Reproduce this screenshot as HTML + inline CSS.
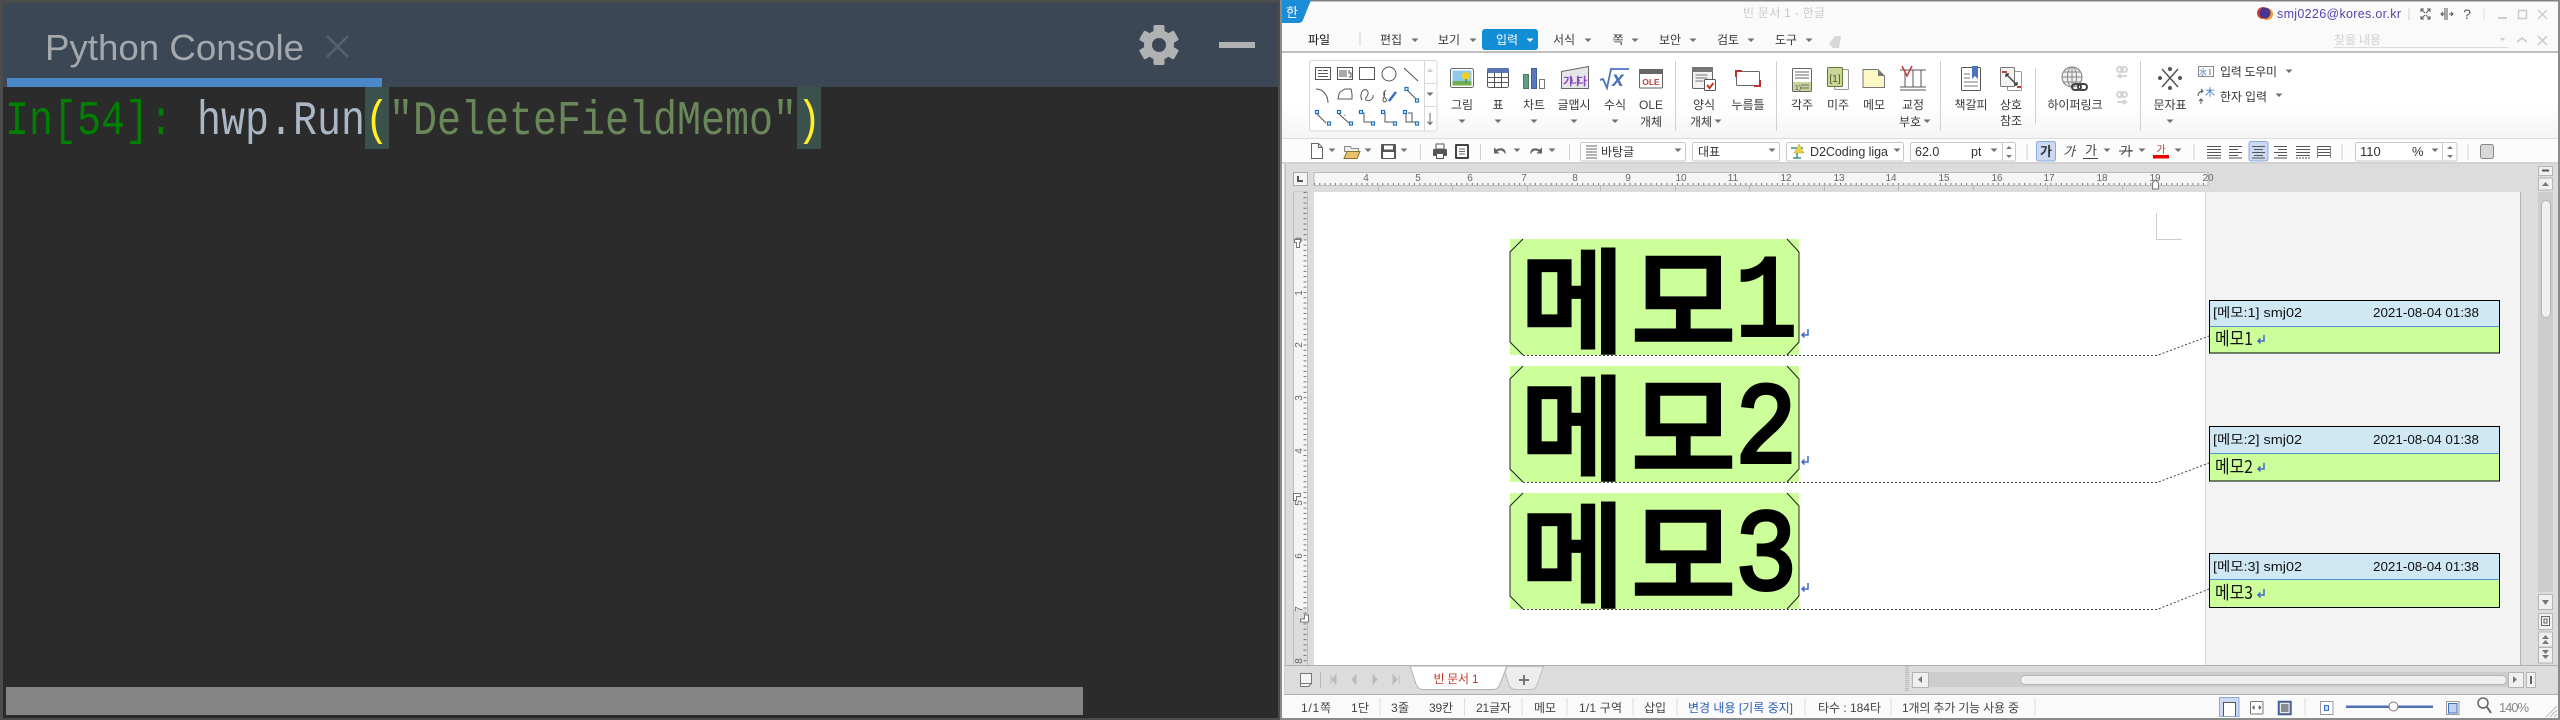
<!DOCTYPE html>
<html><head><meta charset="utf-8"><title>Python Console / 한글</title>
<style>
html,body{margin:0;padding:0;background:#fff;width:2560px;height:720px;overflow:hidden}
svg{display:block}
text{font-family:"Liberation Sans","Noto Sans CJK KR",sans-serif;white-space:pre}
.k{font-size:12px;fill:#3a3a3a;text-anchor:middle}
.s{font-size:12px;fill:#555;text-anchor:middle}
.r{font-size:10px;fill:#666;text-anchor:middle}
.m{font-family:"Liberation Mono",monospace;font-size:48px}
.big{font-family:"Noto Sans CJK KR",sans-serif;font-weight:400;font-size:112px;fill:#000;stroke:#000;stroke-width:5.5px;stroke-linejoin:miter}
.num{font-family:"Liberation Mono",monospace;font-weight:400;font-size:116px;fill:#000;stroke:#000;stroke-width:4px}
.t{font-size:13px;fill:#111}
.b{font-family:"Noto Sans CJK KR",sans-serif;font-size:18px;fill:#111}
.ln{fill:none;stroke:#555;stroke-width:1}
.bl{fill:#fff;stroke:#1f6fb8;stroke-width:1.2}
.dot{fill:none;stroke:#444;stroke-width:1;stroke-dasharray:2 2}
.sep{stroke:#d0d0d0;stroke-width:1}
.cb{fill:#fff;stroke:#c8c8c8;stroke-width:1}
.btn{fill:#f0f0f0;stroke:#b5b5b5;stroke-width:1}
</style></head><body>
<svg xmlns="http://www.w3.org/2000/svg" width="2560" height="720" viewBox="0 0 2560 720">
<defs>
<path id="c" d="M-3.5-1.5h7l-3.500 3.500z" fill="#707070"/>
<path id="ret" d="M7 0v6H1M3.500 3.500L1 6l2.500 2.500" fill="none" stroke="#3f66cc" stroke-width="1.500"/>
<path id="bs" d="M-5 0H5M-5 3H5" stroke="#555"/>
</defs>

<!-- LEFT: Python Console -->
<rect x="0" y="0" width="1280" height="720" fill="#4b4d4d"/>
<rect x="3" y="3" width="1275" height="84" fill="#3c4756"/>
<rect x="3" y="87" width="1275" height="631" fill="#2b2b2b"/>
<rect x="7" y="78" width="375" height="9" fill="#4a88c7"/>
<text x="45" y="60" font-size="36" fill="#a4a8ac" textLength="259" lengthAdjust="spacingAndGlyphs">Python Console</text>
<path d="M327 36L348 57M348 36L327 57" stroke="#56616b" stroke-width="2.500"/>
<g transform="translate(1159 45)" fill="#afb1b3">
<circle r="11" fill="none" stroke="#afb1b3" stroke-width="8"/>
<rect x="-5.500" y="-20" width="11" height="10" rx="1.500"/>
<rect x="-5.500" y="-20" width="11" height="10" rx="1.500" transform="rotate(60)"/>
<rect x="-5.500" y="-20" width="11" height="10" rx="1.500" transform="rotate(120)"/>
<rect x="-5.500" y="-20" width="11" height="10" rx="1.500" transform="rotate(180)"/>
<rect x="-5.500" y="-20" width="11" height="10" rx="1.500" transform="rotate(240)"/>
<rect x="-5.500" y="-20" width="11" height="10" rx="1.500" transform="rotate(300)"/>
</g>
<rect x="1219" y="42" width="36" height="6" fill="#afb1b3"/>
<rect x="365" y="87" width="24" height="62" fill="#3b514d"/>
<rect x="797" y="87" width="24" height="62" fill="#3b514d"/>
<text class="m" x="5" y="134" fill="#008000" textLength="168" lengthAdjust="spacingAndGlyphs">In[54]:</text>
<text class="m" x="197" y="134" fill="#a9b7c6" textLength="168" lengthAdjust="spacingAndGlyphs">hwp.Run</text>
<text class="m" x="365" y="134" fill="#ffef28" textLength="24" lengthAdjust="spacingAndGlyphs">(</text>
<text class="m" x="389" y="134" fill="#6a8759" textLength="408" lengthAdjust="spacingAndGlyphs">"DeleteFieldMemo"</text>
<text class="m" x="797" y="134" fill="#ffef28" textLength="24" lengthAdjust="spacingAndGlyphs">)</text>
<rect x="6" y="687" width="1077" height="28" fill="#858585"/>

<!-- RIGHT: window frame -->
<rect x="1280" y="0" width="1280" height="720" fill="#fafafa"/>
<rect x="1280" y="0" width="1280" height="1.500" fill="#808080"/>
<path d="M1280 0H1311L1303 20Q1302 23 1298 23H1280Z" fill="#1a8dd6"/>
<text x="1292" y="17" font-size="13" fill="#fff" text-anchor="middle">한</text>
<text x="1784" y="17" font-size="12" fill="#c9c9c9" text-anchor="middle" textLength="82">빈 문서 1 - 한글</text>

<circle cx="2263" cy="13" r="6" fill="#d93a2b"/><circle cx="2267" cy="14" r="6" fill="#f29a2e"/><circle cx="2265" cy="13" r="5.500" fill="#46368f"/>
<text x="2277" y="18" font-size="12.500" fill="#5245ad" textLength="124">smj0226@kores.or.kr</text>
<path d="M2409 8V20" class="sep"/>
<path d="M2421 9l4 4M2430 9l-4 4M2421 19l4-4M2430 19l-4-4M2421 12V9h3M2430 12V9h-3M2421 16v3h3M2430 16v3h-3" fill="none" stroke="#555"/>
<path d="M2447 8V20M2441 14h4M2449 14h4M2443 12l-2 2 2 2M2451 12l2 2-2 2M2445 8v12" fill="none" stroke="#555"/>
<text x="2467" y="19" font-size="14" fill="#555" text-anchor="middle">?</text>
<path d="M2484 8V20" stroke="#e0e0e0"/>
<rect x="2498" y="17" width="9" height="2" fill="#ccc"/>
<rect x="2518.500" y="10.500" width="8" height="8" fill="none" stroke="#ccc" stroke-width="1.500"/>
<path d="M2538 10l9 9M2547 10l-9 9" stroke="#ccc" stroke-width="1.500"/>

<!-- Menu row -->
<text class="k" x="1319" y="44" style="fill:#111">파일</text>
<path d="M1360 33V46" class="sep"/>
<rect x="1482" y="29" width="56" height="21" rx="3" fill="#128ed6"/>
<g class="men">
<text class="k" x="1391" y="44">편집</text><use href="#c" x="1415" y="40"/>
<text class="k" x="1449" y="44">보기</text><use href="#c" x="1473" y="40"/>
<text class="k" x="1507" y="44" style="fill:#fff">입력</text><path d="M1526.500 38.500h7l-3.500 3.500z" fill="#fff"/>
<text class="k" x="1564" y="44">서식</text><use href="#c" x="1588" y="40"/>
<text class="k" x="1618" y="44">쪽</text><use href="#c" x="1635" y="40"/>
<text class="k" x="1670" y="44">보안</text><use href="#c" x="1693" y="40"/>
<text class="k" x="1728" y="44">검토</text><use href="#c" x="1751" y="40"/>
<text class="k" x="1786" y="44">도구</text><use href="#c" x="1809" y="40"/>
</g>
<path d="M1829 44l6-8 6 0-2 12-6 0z" fill="#d8d8d8"/>
<text x="2334" y="44" font-size="12" fill="#d0d0d0" textLength="47">찾을 내용</text>
<path d="M2334 47.500H2508" stroke="#dcdcdc"/>
<path d="M2499.500 38h6l-3 3z" fill="#d0d0d0"/>
<path d="M2517 42l5-4 5 4" fill="none" stroke="#c8c8c8" stroke-width="1.500"/>
<path d="M2538 36l9 9M2547 36l-9 9" stroke="#c8c8c8" stroke-width="1.500"/>
<rect x="1280" y="51" width="1280" height="2" fill="#c0c0c0"/>

<!-- Ribbon -->
<defs><linearGradient id="rg" x1="0" y1="0" x2="0" y2="1"><stop offset="0.6" stop-color="#fff"/><stop offset="1" stop-color="#f5f5f5"/></linearGradient></defs>
<rect x="1281" y="53" width="1279" height="85" fill="url(#rg)"/>
<path d="M1280 138.500H2560" stroke="#dcdcdc"/>
<rect x="1309.500" y="60.500" width="127.500" height="70.500" rx="2" fill="#fff" stroke="#d8d8d8"/>
<path d="M1424.500 61V131M1424.500 83.500H1437M1424.500 106.500H1437" stroke="#d8d8d8"/>
<path d="M1427 72h6l-3-4z" fill="#d0d0d0"/><use href="#c" x="1430" y="94"/>
<path d="M1430 113v11M1427.500 121.500l2.500 3 2.500-3" fill="none" stroke="#666"/>
<!-- gallery -->
<g class="ln">
<rect x="1315.500" y="67.500" width="15" height="12"/><path d="M1318 70.500h4M1318 73.500h10M1318 76.500h10M1323 70.500h5" />
<rect x="1337.500" y="67.500" width="15" height="12"/><path d="M1340 70v7M1342 70v7M1344 70v7M1346 70v7M1349 70v3h2v4h-2"/>
<rect x="1359.500" y="67.500" width="15" height="12"/>
<circle cx="1389" cy="74" r="7"/>
<path d="M1404 68L1418 81"/>
<path d="M1316 89C1323 89 1328 95 1328 103"/>
<path d="M1340 92l5-3h6l1 5v5h-14l1-5z"/>
<path d="M1362 100C1358 92 1366 86 1368 92C1369 97 1364 97 1366 100C1369 102 1374 99 1373 95"/>
<path d="M1386 90c-3 2-3 6 0 9 2 3-3 4-3 1 0-3 3-4 1-9"/>
<path d="M1389 101l7-9" stroke="#3c6fc3" stroke-width="2.500"/>
<path d="M1407 90L1416 99M1317 114L1326 123M1339 114L1349 123M1345 116v-1M1361 113h3v9h8M1382 113h3v9h9M1403 113h3v9h10M1408 113h4v9"/>
</g>
<g class="bl">
<rect x="1405" y="87.500" width="3" height="3"/><rect x="1415.500" y="99" width="3" height="3"/>
<rect x="1315.500" y="110.500" width="3" height="3"/><rect x="1327.500" y="122" width="3" height="3"/>
<rect x="1337.500" y="110.500" width="3" height="3"/><rect x="1349.500" y="122" width="3" height="3"/>
<rect x="1359.500" y="110.500" width="3" height="3"/><rect x="1371.500" y="122" width="3" height="3"/>
<rect x="1381.500" y="110.500" width="3" height="3"/><rect x="1393.500" y="122" width="3" height="3"/>
<rect x="1403.500" y="110.500" width="3" height="3"/><rect x="1415.500" y="122" width="3" height="3"/>
</g>
<!-- 그림 -->
<rect x="1450.500" y="68.500" width="23" height="19" rx="2" fill="#fff" stroke="#666"/>
<rect x="1452.500" y="70.500" width="19" height="15" fill="#8fc9ee"/><rect x="1452.500" y="81" width="19" height="4.500" fill="#6fae52"/>
<circle cx="1466" cy="76" r="4" fill="#f6cf25"/><rect x="1465" y="79" width="2" height="4" fill="#5b9a40"/>
<text class="k" x="1462" y="109">그림</text><use href="#c" x="1462" y="121"/>
<!-- 표 -->
<rect x="1487.500" y="68.500" width="21" height="19" rx="2" fill="#fff" stroke="#555"/>
<rect x="1487" y="68" width="22" height="5" rx="1" fill="#5a74b4"/>
<path d="M1494.500 73V87M1501.500 73V87M1488 77.500H1508M1488 82.500H1508" stroke="#555"/>
<text class="k" x="1498" y="109">표</text><use href="#c" x="1498" y="121"/>
<!-- 차트 -->
<rect x="1523.500" y="74.500" width="5" height="14" fill="#5fa082" stroke="#4d7b63"/>
<rect x="1531.500" y="68.500" width="5" height="20" fill="#5a78bd" stroke="#3f5c9c"/>
<rect x="1539.500" y="79.500" width="5" height="9" fill="#fff" stroke="#777"/>
<text class="k" x="1534" y="109">차트</text><use href="#c" x="1534" y="121"/>
<!-- 글맵시 -->
<path d="M1561.500 71.500L1588.500 66.500V88.500H1561.500Z" fill="#e6e6e6" stroke="#666"/>
<text x="1575" y="85" font-size="11" font-weight="700" fill="#8a4bbf" text-anchor="middle" textLength="24">가나다</text>
<text class="k" x="1574" y="109">글맵시</text><use href="#c" x="1574" y="121"/>
<!-- 수식 -->
<path d="M1600 80l3-1 4 9 4-19h18" fill="none" stroke="#4b72bd" stroke-width="1.800"/>
<text x="1618" y="86" font-family="Liberation Serif" font-style="italic" font-weight="700" font-size="21" fill="#4b72bd" text-anchor="middle">x</text>
<text class="k" x="1615" y="109">수식</text><use href="#c" x="1615" y="121"/>
<!-- OLE -->
<rect x="1639.500" y="69.500" width="23" height="18.500" rx="1" fill="#fff" stroke="#666"/>
<rect x="1639" y="69" width="24" height="5" fill="#666"/>
<text x="1651" y="85" font-size="8.500" font-weight="700" fill="#c23b3b" text-anchor="middle">OLE</text>
<text class="k" x="1651" y="109">OLE</text><text class="k" x="1651" y="126">개체</text>
<path d="M1675.500 61V131" class="sep"/>
<!-- 양식 -->
<rect x="1692.500" y="67.500" width="20" height="21" rx="1" fill="#f2f2f2" stroke="#666"/><rect x="1692" y="67" width="21" height="5" fill="#777"/>
<path d="M1695.500 75h12M1695.500 78h12M1695.500 81h8" stroke="#777"/>
<rect x="1704.500" y="79.500" width="11" height="11" rx="1" fill="#fff" stroke="#555"/>
<path d="M1707 85l2.500 3 4-5" fill="none" stroke="#c0392b" stroke-width="2"/>
<text class="k" x="1704" y="109">양식</text><text class="k" x="1701" y="126">개체</text><use href="#c" x="1718" y="121"/>
<!-- 누름틀 -->
<rect x="1736.500" y="71.500" width="23" height="14" rx="1" fill="#fff" stroke="#666"/>
<path d="M1736 77v-6h6M1760 80v6h-6" fill="none" stroke="#b83232" stroke-width="2"/>
<text class="k" x="1748" y="109">누름틀</text>
<path d="M1776.500 61V131" class="sep"/>
<!-- 각주 -->
<rect x="1792.500" y="68.500" width="19" height="23" rx="1" fill="#fff" stroke="#666"/>
<rect x="1793" y="82" width="18" height="9" fill="#c8d69a"/>
<path d="M1795 72h14M1795 75h14M1795 78h14M1801 85h8M1801 88h8" stroke="#666"/>
<text x="1798" y="90" font-size="7" fill="#555" text-anchor="middle">1)</text>
<text class="k" x="1802" y="109">각주</text>
<!-- 미주 -->
<rect x="1834.500" y="69.500" width="14" height="20" rx="1" fill="#fafafa" stroke="#999"/>
<rect x="1827.500" y="67.500" width="15" height="19" rx="1" fill="#c8d69a" stroke="#667a3a"/>
<text x="1835" y="82" font-family="Liberation Mono" font-size="10" fill="#445522" text-anchor="middle">[1]</text>
<text class="k" x="1838" y="109">미주</text>
<!-- 메모 -->
<path d="M1863 69.500H1878L1884.500 76V87.500H1863Z" fill="#fdf6c5" stroke="#777"/>
<path d="M1878 70L1884 76H1878Z" fill="#777"/>
<text class="k" x="1874" y="109">메모</text>
<!-- 교정 -->
<path d="M1900 70H1926M1900 87H1926M1900 90H1926M1905 70V87M1913 70V87M1921 70V87" stroke="#555" fill="none"/>
<path d="M1902 66l5 10 5-10" fill="none" stroke="#c23b3b" stroke-width="1.500"/>
<text class="k" x="1913" y="109">교정</text><text class="k" x="1910" y="126">부호</text><use href="#c" x="1927" y="121"/>
<path d="M1940.500 61V131" class="sep"/>
<!-- 책갈피 -->
<rect x="1961.500" y="67.500" width="19" height="23" rx="1" fill="#fff" stroke="#555"/>
<path d="M1972 66h6v13l-3-3-3 3z" fill="#4f74bc"/>
<path d="M1964 74h6M1964 78h6M1964 82h14M1964 86h14" stroke="#777"/>
<text class="k" x="1971" y="109">책갈피</text>
<!-- 상호 참조 -->
<rect x="2007.500" y="71.500" width="14" height="19" rx="1" fill="#fff" stroke="#999"/>
<rect x="2000.500" y="67.500" width="14" height="19" rx="1" fill="#f4f4f4" stroke="#777"/>
<path d="M2002 72h5M2017 87h4" stroke="#c23b3b" stroke-width="2"/>
<path d="M2006 74L2017 85M2006 74v3M2006 74h3M2017 85v-3M2017 85h-3" stroke="#444" stroke-width="1.500" fill="none"/>
<text class="k" x="2011" y="109">상호</text><text class="k" x="2011" y="125">참조</text>
<path d="M2035.500 68V124" class="sep"/>
<!-- 하이퍼링크 -->
<circle cx="2072" cy="77" r="10" fill="#eee" stroke="#777"/>
<path d="M2072 67V87M2062 77H2082M2063.500 72H2080.500M2063.500 82H2080.500" stroke="#888"/><ellipse cx="2072" cy="77" rx="4.500" ry="10" fill="none" stroke="#888"/>
<rect x="2072" y="84" width="9" height="6" rx="3" fill="none" stroke="#444" stroke-width="2"/><rect x="2078" y="84" width="9" height="6" rx="3" fill="none" stroke="#444" stroke-width="2"/>
<text class="k" x="2075" y="109">하이퍼링크</text>
<g fill="none" stroke="#d4d4d4" stroke-width="2">
<rect x="2117" y="67" width="6" height="5" rx="2.500"/><rect x="2121" y="67" width="6" height="5" rx="2.500"/>
<path d="M2127 76h-9M2121 74l-3 2 3 2"/>
<rect x="2117" y="92" width="6" height="5" rx="2.500"/><rect x="2121" y="92" width="6" height="5" rx="2.500"/>
<path d="M2117 102h9M2123 100l3 2-3 2"/>
</g>
<path d="M2140.500 61V131" class="sep"/>
<!-- 문자표 -->
<path d="M2162 69L2178 87M2178 69L2162 87" stroke="#555" stroke-width="1.500"/>
<circle cx="2170" cy="69" r="2" fill="#555"/><circle cx="2170" cy="88" r="2" fill="#555"/><circle cx="2160" cy="78" r="2" fill="#555"/><circle cx="2180" cy="78" r="2" fill="#555"/>
<text class="k" x="2170" y="109">문자표</text><use href="#c" x="2170" y="121"/>
<rect x="2198.500" y="66.500" width="15" height="10" fill="#fff" stroke="#888"/>
<text x="2203" y="75" font-size="8" fill="#3c78c4" text-anchor="middle">水</text><text x="2210" y="75" font-size="8" fill="#444" text-anchor="middle">I</text>
<text x="2220" y="76" font-size="12" fill="#333" textLength="57">입력 도우미</text><use href="#c" x="2289" y="71"/>
<path d="M2198 96c0-3 2-5 5-5M2201 89l2 2-2 2M2201 104v-5M2199 101l2-2 2 2" fill="none" stroke="#555"/>
<text x="2210" y="96" font-size="10" fill="#3c78c4" text-anchor="middle">木</text>
<text x="2220" y="101" font-size="12" fill="#333" textLength="47">한자 입력</text><use href="#c" x="2279" y="95"/>

<!-- Toolbar -->
<rect x="1280" y="139" width="1280" height="24" fill="#fcfcfc"/>
<path d="M1311.500 143.500h7l4 4v11h-11z M1318.500 143.500v4h4" fill="#fff" stroke="#666"/><use href="#c" x="1332" y="150"/>
<path d="M1344.500 146.500h6l1 2h7v3h-14z" fill="#efefef" stroke="#888"/><path d="M1347 151.500h13l-3 7h-13z" fill="#e9c26e" stroke="#8a7434"/><use href="#c" x="1368" y="150"/>
<rect x="1381" y="144" width="15" height="15" rx="1" fill="#555"/><rect x="1384" y="145.500" width="9" height="4" fill="#fff"/><rect x="1383" y="152" width="11" height="6" fill="#fff"/><use href="#c" x="1404" y="150"/>
<path d="M1420.500 144V160" class="sep"/>
<rect x="1433" y="149" width="14" height="7" rx="1" fill="#555"/><rect x="1436" y="144" width="8" height="5" fill="#fff" stroke="#555"/><rect x="1436.500" y="153.500" width="7" height="5" fill="#fff" stroke="#555"/>
<rect x="1455" y="144" width="14" height="15" rx="1" fill="#444"/><rect x="1457" y="146" width="10" height="11" fill="#fff"/><path d="M1459 149h6M1459 151.500h6M1459 154h6" stroke="#666"/>
<path d="M1480.500 144V160" class="sep"/>
<path d="M1494 147.500v6h5.500l-2-2c3-2 6-1 8 3 1-5-3-8-9-5z" fill="#666"/><use href="#c" x="1517" y="150"/>
<path d="M1542 147.500v6h-5.500l2-2c-3-2-6-1-8 3-1-5 3-8 9-5z" fill="#666"/><use href="#c" x="1552" y="150"/>
<path d="M1569.500 144V160" class="sep"/>
<rect class="cb" x="1580.500" y="142.500" width="105" height="18.500" rx="2"/><path d="M1586 146h11M1586 149h11M1586 152h11M1586 155h11M1586 158h11" stroke="#666"/>
<text x="1601" y="156" font-size="12" fill="#333">바탕글</text><use href="#c" x="1678" y="150"/>
<rect class="cb" x="1692.500" y="142.500" width="87" height="18.500" rx="2"/><text x="1698" y="156" font-size="12" fill="#333">대표</text><use href="#c" x="1772" y="150"/>
<rect class="cb" x="1786.500" y="142.500" width="117" height="18.500" rx="2"/>
<path d="M1791 148h12M1797 148v10M1793 158h8" stroke="#3e8e8a" stroke-width="1.500" fill="none"/><path d="M1799 144l5 9h-10z" fill="#f0cf4a" stroke="#b39b2c" stroke-width=".5"/>
<text x="1810" y="156" font-size="12.500" fill="#333" textLength="78">D2Coding liga</text><use href="#c" x="1897" y="150"/>
<rect class="cb" x="1910.500" y="142.500" width="105" height="18.500" rx="2"/><text x="1915" y="156" font-size="12.500" fill="#333">62.0</text><text x="1971" y="156" font-size="12.500" fill="#333">pt</text><use href="#c" x="1994" y="150"/>
<path d="M2002.500 143V161" stroke="#c8c8c8"/><path d="M2006 149h6l-3-3zM2006 155h6l-3 3z" fill="#777"/>
<path d="M2027 144V160" class="sep"/>
<rect x="2036.500" y="141.500" width="19" height="19.500" rx="2" fill="#cbdaf2" stroke="#8eaadb"/>
<text x="2046" y="156" font-size="13" font-weight="700" fill="#333" text-anchor="middle">가</text>
<text x="2069" y="156" font-size="13" font-style="italic" fill="#444" text-anchor="middle">가</text>
<text x="2091" y="155" font-size="13" fill="#444" text-anchor="middle">가</text><path d="M2083 158.500H2098" stroke="#444"/><use href="#c" x="2107" y="150"/>
<text x="2126" y="156" font-size="13" fill="#444" text-anchor="middle">가</text><path d="M2119 151H2133" stroke="#444"/><use href="#c" x="2142" y="150"/>
<text x="2161" y="153" font-size="10" fill="#b53a3a" text-anchor="middle">가</text><rect x="2153" y="155" width="16" height="3.500" fill="#ee0000"/><use href="#c" x="2178" y="150"/>
<path d="M2194 144V160" class="sep"/>
<rect x="2249" y="141.500" width="19" height="19.500" rx="2" fill="#cbdaf2" stroke="#8eaadb"/>
<g stroke="#555">
<path d="M2207 146.500h14M2207 149.500h14M2207 152.500h14M2207 155.500h14M2207 158h14"/>
<path d="M2229 146.500h13M2229 149.500h9M2229 152.500h13M2229 155.500h9M2229 158h13"/>
<path d="M2252 146.500h13M2254 149.500h9M2252 152.500h13M2254 155.500h9M2252 158h13"/>
<path d="M2274 146.500h13M2278 149.500h9M2274 152.500h13M2278 155.500h9M2274 158h13"/>
<path d="M2296 146.500h14M2296 149.500h14M2296 152.500h14M2296 155.500h14" /><path d="M2296 158h14" stroke-dasharray="2 1"/>
<path d="M2317 146.500h14M2317 149.500h14M2317 152.500h14M2317 155.500h14"/><path d="M2317.500 146V158M2330.500 146V158" stroke="#888"/>
</g>
<path d="M2342 144V160" class="sep"/>
<rect class="cb" x="2355.500" y="142.500" width="101.500" height="18.500" rx="2"/><text x="2360" y="156" font-size="13" fill="#333">110</text><text x="2412" y="156" font-size="13" fill="#333">%</text><use href="#c" x="2435" y="150"/>
<path d="M2442.500 143V161" stroke="#c8c8c8"/><path d="M2447 149h6l-3-3zM2447 155h6l-3 3z" fill="#777"/>
<path d="M2468 144V160" class="sep"/>
<rect x="2480.500" y="144.500" width="13" height="14" rx="2" fill="#d8d8d8" stroke="#888"/>
<path d="M1280 163H2560" stroke="#c4c4c4" stroke-width="1.500"/>

<!-- Doc area -->
<rect x="1282" y="164" width="1276" height="502" fill="#dcdcdc"/>
<rect x="1282" y="164" width="3" height="530" fill="#fafafa"/><path d="M1285 164V695" stroke="#a8a8a8"/>
<!-- top ruler -->
<rect x="1314" y="172.500" width="894" height="13" fill="#f5f5f5" stroke="#bdbdbd"/>
<rect x="1293.500" y="172.500" width="14" height="13" fill="#f4f4f4" stroke="#aaa"/><path d="M1298 176v5h5" fill="none" stroke="#555" stroke-width="2"/>
<path d="M1314 184H2208" stroke="#777" stroke-width="2" stroke-dasharray="1 4.260"/>
<path d="M1378.500 186v5M1452.500 186v5M1527.500 186v5M1600.500 186v5M1675.500 186v5M1749.500 186v5M1824.500 186v5M1898.500 186v5M1973.500 186v5M2047.500 186v5M2122.500 186v5" stroke="#bbb"/>
<text class="r" y="181" x="1366">4</text><text class="r" y="181" x="1418">5</text><text class="r" y="181" x="1470">6</text><text class="r" y="181" x="1524">7</text><text class="r" y="181" x="1575">8</text><text class="r" y="181" x="1628">9</text><text class="r" y="181" x="1681">10</text><text class="r" y="181" x="1733">11</text><text class="r" y="181" x="1786">12</text><text class="r" y="181" x="1839">13</text><text class="r" y="181" x="1891">14</text><text class="r" y="181" x="1944">15</text><text class="r" y="181" x="1997">16</text><text class="r" y="181" x="2049">17</text><text class="r" y="181" x="2102">18</text><text class="r" y="181" x="2155">19</text><text class="r" y="181" x="2208">20</text>
<path d="M2152.500 186v-3l3-3 3 3v6h-6z" fill="#fff" stroke="#777"/>
<!-- left ruler -->
<rect x="1293.500" y="192" width="14" height="473" fill="#f5f5f5" stroke="#bdbdbd"/>
<rect x="1294" y="192" width="13" height="47" fill="#dcdcdc"/>
<rect x="1294" y="609" width="13" height="56" fill="#dcdcdc"/>
<path d="M1305 192V665" stroke="#777" stroke-width="3" stroke-dasharray="1 4.260"/>
<g>
<text class="r" transform="translate(1302 240) rotate(-90)">0</text><text class="r" transform="translate(1302 293) rotate(-90)">1</text><text class="r" transform="translate(1302 345) rotate(-90)">2</text><text class="r" transform="translate(1302 398) rotate(-90)">3</text><text class="r" transform="translate(1302 451) rotate(-90)">4</text><text class="r" transform="translate(1302 503) rotate(-90)">5</text><text class="r" transform="translate(1302 556) rotate(-90)">6</text><text class="r" transform="translate(1302 609) rotate(-90)">7</text><text class="r" transform="translate(1302 661) rotate(-90)">8</text>
</g>
<path d="M1294.500 239.500h6v3h-1v5h-3v-5h-2z" fill="#fff" stroke="#777"/>
<path d="M1293.500 493.500h7v3h-4v4h-3z" fill="#fff" stroke="#777"/>
<path d="M1308.500 615v7h-8v-3h4v-4z" fill="#fff" stroke="#777"/>

<!-- paper -->
<rect x="1314" y="192" width="891" height="473" fill="#fff"/>
<rect x="2205" y="192" width="315" height="473" fill="#f3f3f3"/>
<path d="M2205.500 192V665" stroke="#dcdcdc"/>
<path d="M2520.500 192V665" stroke="#b4b4b4"/>
<path d="M2156.500 213V239.500H2182" fill="none" stroke="#ccc"/>

<!-- Green field boxes -->
<g>
<rect x="1510" y="239" width="289" height="116" fill="#ccff99"/>
<rect x="1510" y="366" width="289" height="116" fill="#ccff99"/>
<rect x="1510" y="493" width="289" height="116" fill="#ccff99"/>
</g>
<g fill="none" stroke="#222" stroke-width="1">
<path d="M1523 239l-13 13V342l13 13M1787 239l12 13V342l-12 13"/>
<path d="M1523 366l-13 13V469l13 13M1787 366l12 13V469l-12 13"/>
<path d="M1523 493l-13 13V596l13 13M1787 493l12 13V596l-12 13"/>
</g>
<text class="big" x="1521" y="343">메</text><text class="big" x="1632" y="343">모</text><text class="num" x="1735" y="335" textLength="62" lengthAdjust="spacingAndGlyphs">1</text>
<text class="big" x="1521" y="470">메</text><text class="big" x="1632" y="470">모</text><text class="num" x="1735" y="462" textLength="62" lengthAdjust="spacingAndGlyphs">2</text>
<text class="big" x="1521" y="597">메</text><text class="big" x="1632" y="597">모</text><text class="num" x="1735" y="589" textLength="62" lengthAdjust="spacingAndGlyphs">3</text>
<use href="#ret" x="1801" y="329"/><use href="#ret" x="1801" y="456"/><use href="#ret" x="1801" y="583"/>

<!-- dotted leaders -->
<path class="dot" d="M1523 355.500H2157L2209 336"/>
<path class="dot" d="M1523 482.500H2157L2209 463"/>
<path class="dot" d="M1523 609.500H2157L2209 589"/>

<!-- memo boxes -->
<g>
<rect x="2209.500" y="300.500" width="290" height="52.500" fill="#ccff99" stroke="#000"/>
<rect x="2210" y="301" width="289" height="25" fill="#d0e8f4"/><path d="M2210 326.500H2499" stroke="#4f95cf"/>
<text class="t" x="2213" y="317" textLength="89" lengthAdjust="spacingAndGlyphs">[메모:1] smj02</text><text class="t" x="2373" y="317" textLength="106" lengthAdjust="spacingAndGlyphs">2021-08-04 01:38</text>
<text class="b" x="2215" y="345" textLength="38" lengthAdjust="spacingAndGlyphs">메모1</text><use href="#ret" x="2257" y="335"/>

<rect x="2209.500" y="426.500" width="290" height="54.500" fill="#ccff99" stroke="#000"/>
<rect x="2210" y="427" width="289" height="26" fill="#d0e8f4"/><path d="M2210 453.500H2499" stroke="#4f95cf"/>
<text class="t" x="2213" y="444" textLength="89" lengthAdjust="spacingAndGlyphs">[메모:2] smj02</text><text class="t" x="2373" y="444" textLength="106" lengthAdjust="spacingAndGlyphs">2021-08-04 01:38</text>
<text class="b" x="2215" y="473" textLength="38" lengthAdjust="spacingAndGlyphs">메모2</text><use href="#ret" x="2257" y="463"/>

<rect x="2209.500" y="553.500" width="290" height="54" fill="#ccff99" stroke="#000"/>
<rect x="2210" y="554" width="289" height="25" fill="#d0e8f4"/><path d="M2210 579.500H2499" stroke="#4f95cf"/>
<text class="t" x="2213" y="571" textLength="89" lengthAdjust="spacingAndGlyphs">[메모:3] smj02</text><text class="t" x="2373" y="571" textLength="106" lengthAdjust="spacingAndGlyphs">2021-08-04 01:38</text>
<text class="b" x="2215" y="599" textLength="38" lengthAdjust="spacingAndGlyphs">메모3</text><use href="#ret" x="2257" y="589"/>
</g>

<!-- vertical scrollbar -->
<rect x="2538" y="192" width="15" height="400" fill="#cdcdcd"/>
<rect x="2541.500" y="200.500" width="9" height="117" rx="4.500" fill="#f0f0f0" stroke="#b5b5b5"/>
<rect class="btn" x="2538.500" y="166.500" width="14" height="9"/><path d="M2542 170.500h7" stroke="#555" stroke-width="2"/>
<rect class="btn" x="2538.500" y="178" width="14" height="12"/><path d="M2542 186h7l-3.500-4z" fill="#777"/>
<rect class="btn" x="2538.500" y="594.500" width="14" height="15"/><path d="M2542 600h7l-3.500 5z" fill="#777"/>
<rect class="btn" x="2538.500" y="613.500" width="14" height="16"/><rect x="2541.500" y="616.500" width="8" height="9" fill="none" stroke="#666"/><rect x="2544" y="619" width="3" height="4" fill="none" stroke="#666"/>
<rect class="btn" x="2538.500" y="632" width="14" height="15"/><path d="M2542 639h7l-3.500-4zM2542 644h7l-3.500-4z" fill="#777"/>
<rect class="btn" x="2538.500" y="647.500" width="14" height="15.500"/><path d="M2542 650h7l-3.500 4zM2542 655h7l-3.500 4z" fill="#777"/>

<!-- tab bar -->
<rect x="1285" y="665.500" width="1275" height="29" fill="#dcdcdc"/>
<path d="M1285 665.500H2560M1285 694.500H2560" stroke="#b0b0b0"/>
<path d="M1300.500 673.500h11v10l-3 3h-8z M1300.500 683.500h11" fill="#f5f5f5" stroke="#777"/>
<path d="M1320.500 672V688" stroke="#bbb"/>
<path d="M1336 675v9l-4-4.500zM1331 675v9M1356 675v9l-4-4.500zM1373 675v9l4-4.500zM1393 675v9l4-4.500zM1399 675v9" fill="#bbb" stroke="#bbb"/>
<path d="M1507 666.500L1543.500 666.500 1537 685Q1535 689.500 1531 689.500H1517Q1510 689.500 1509 685L1505 672Z" fill="#ededed" stroke="#bdbdbd"/>
<path d="M1410 666L1416 684Q1418 689.500 1423 689.500H1493Q1498 689.500 1500 684L1507 666Z" fill="#fff" stroke="#b0b0b0"/>
<text x="1456" y="683" font-size="12" fill="#c0392b" text-anchor="middle" textLength="45">빈 문서 1</text>
<path d="M1524 675v10M1519 680h10" stroke="#777" stroke-width="2"/>
<path d="M1906 666V692M1908 666V692" stroke="#999" stroke-dasharray="1 1"/>
<rect x="1928" y="672" width="580" height="15" fill="#cdcdcd"/>
<rect class="btn" x="1912.500" y="672.500" width="16" height="15"/><path d="M1922 676v7l-4-3.500z" fill="#777"/>
<rect x="2020.500" y="675.500" width="486" height="9" rx="4.500" fill="#f0f0f0" stroke="#b5b5b5"/>
<rect class="btn" x="2508.500" y="672.500" width="15" height="15"/><path d="M2513 676v7l4-3.500z" fill="#777"/>
<rect class="btn" x="2526.500" y="672.500" width="9" height="15"/><path d="M2531 676v8" stroke="#666" stroke-width="2"/>

<!-- Status -->
<rect x="1282" y="695" width="1276" height="23" fill="#fafafa"/>
<g font-size="12" fill="#444">
<text x="1301" y="712" textLength="30">1/1쪽</text>
<text x="1351" y="712" textLength="18">1단</text>
<text x="1391" y="712" textLength="18">3줄</text>
<text x="1429" y="712" textLength="24">39칸</text>
<text x="1476" y="712" textLength="35">21글자</text>
<text x="1534" y="712" textLength="22">메모</text>
<text x="1579" y="712" textLength="43">1/1 구역</text>
<text x="1644" y="712" textLength="22">삽입</text>
<text x="1688" y="712" textLength="105" fill="#2a5db0">변경 내용 [기록 중지]</text>
<text x="1818" y="712" textLength="63">타수 : 184타</text>
<text x="1902" y="712" textLength="117">1개의 추가 기능 사용 중</text>
</g>
<path d="M1380 698V716M1464.500 698V716M1522 698V716M1567 698V716M1633 698V716M1677 698V716M1805 698V716M1891 698V716M2035 698V716M2305 698V716" stroke="#dedede"/>
<rect x="2219.500" y="697.500" width="19.500" height="19" fill="#cbdaf2" stroke="#8eaadb"/>
<path d="M2223.500 716V702.500h12V716M2223.500 702.500" fill="#fff" stroke="#555"/>
<rect x="2250.500" y="701.500" width="12.500" height="12.500" rx="1" fill="#fff" stroke="#777"/><path d="M2254 707.500h1M2258 707.500h1M2252.500 707.500l1.500-1.500v3zM2261 707.500l-1.500-1.500v3z" stroke="#777"/>
<rect x="2278.500" y="701.500" width="12.500" height="13" fill="#8a8a92" stroke="#3f5f9f" stroke-width="1.500"/><rect x="2280.500" y="703.500" width="8.500" height="9" fill="#8a8a92" stroke="#e8e8e8"/>
<rect x="2320.500" y="701.500" width="12.500" height="13" fill="#fff" stroke="#999"/><rect x="2324.500" y="705.500" width="4" height="5" fill="#cbdaf2" stroke="#3f6fc0"/>
<rect x="2346" y="705.500" width="87" height="2.500" fill="#4f6fb5"/>
<circle cx="2393.500" cy="706.500" r="4.500" fill="#fff" stroke="#777"/>
<rect x="2446.500" y="701.500" width="12.500" height="13" fill="#fff" stroke="#999"/><rect x="2448.500" y="703.500" width="8.500" height="9.500" fill="#c2d3ef" stroke="#3f6fc0"/>
<circle cx="2483" cy="703" r="5" fill="none" stroke="#666" stroke-width="1.500"/><path d="M2487 707L2491 713" stroke="#666" stroke-width="2"/>
<text x="2499" y="712" font-size="13" fill="#888" textLength="30">140%</text>
<path d="M2546 717L2557 706M2550 717L2557 710M2554 717L2557 714" stroke="#bbb"/>

<!-- frame -->
<path d="M1281 0V720M2559 0V720M1280 719H2560" stroke="#8a8a8a" stroke-width="2" fill="none"/>
</svg>
</body></html>
